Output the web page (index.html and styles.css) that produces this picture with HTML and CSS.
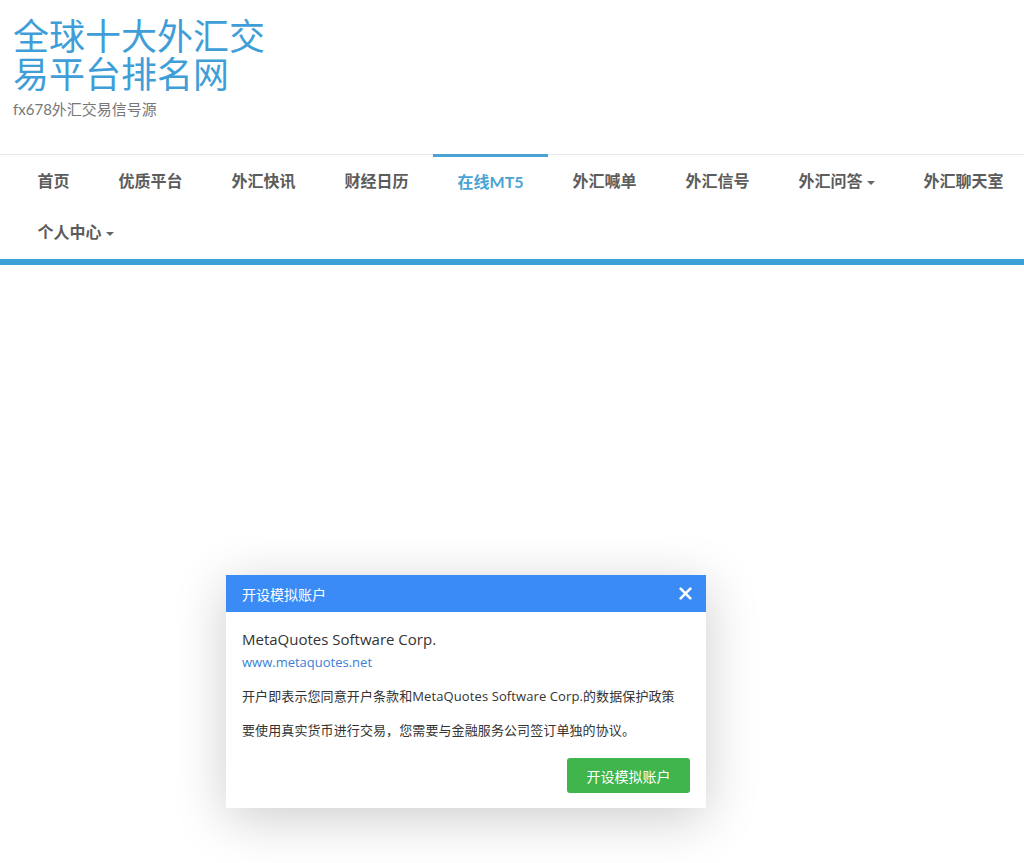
FILE: index.html
```html
<!DOCTYPE html>
<html lang="zh-CN">
<head>
<meta charset="utf-8">
<title>全球十大外汇交易平台排名网</title>
<link rel="stylesheet" href="styles.css">
</head>
<body>
<header class="site-header">
  <h1 class="site-title">全球十大外汇交易平台排名网</h1>
  <p class="site-desc">fx678外汇交易信号源</p>
</header>
<nav class="main-nav">
  <ul class="nav-list">
    <li class="nav-item"><a href="#">首页</a></li>
    <li class="nav-item"><a href="#">优质平台</a></li>
    <li class="nav-item"><a href="#">外汇快讯</a></li>
    <li class="nav-item"><a href="#">财经日历</a></li>
    <li class="nav-item active"><a href="#">在线MT5</a></li>
    <li class="nav-item"><a href="#">外汇喊单</a></li>
    <li class="nav-item"><a href="#">外汇信号</a></li>
    <li class="nav-item"><a href="#">外汇问答<span class="caret"></span></a></li>
    <li class="nav-item"><a href="#">外汇聊天室</a></li>
    <li class="nav-item"><a href="#">个人中心<span class="caret"></span></a></li>
  </ul>
</nav>
<main class="content"></main>

<div class="modal">
  <div class="modal-head">
    <span class="modal-title">开设模拟账户</span>
    <span class="modal-close">
      <svg width="13" height="13" viewBox="0 0 12 12"><path d="M1.5 1.5 L10.5 10.5 M10.5 1.5 L1.5 10.5" stroke="#fff" stroke-width="2.4" stroke-linecap="round"/></svg>
    </span>
  </div>
  <div class="modal-body">
    <div class="company">MetaQuotes Software Corp.</div>
    <a class="company-link" href="#">www.metaquotes.net</a>
    <p class="note">开户即表示您同意开户条款和MetaQuotes Software Corp.的数据保护政策</p>
    <p class="note">要使用真实货币进行交易，您需要与金融服务公司签订单独的协议。</p>
    <div class="modal-actions">
      <button class="btn-green">开设模拟账户</button>
    </div>
  </div>
</div>
</body>
</html>
```

FILE: styles.css
```css
* { box-sizing: border-box; }
html, body {
  margin: 0;
  padding: 0;
  background: #fff;
}
body {
  font-family: Lato, "Noto Sans CJK SC", sans-serif;
  color: #555;
  min-height: 863px;
  overflow-x: hidden;
}
.site-header {
  padding: 17px 0 0 13px;
}
.site-title {
  margin: 0;
  width: 270px;
  font-size: 36px;
  line-height: 38px;
  font-weight: 400;
  color: #3f9ed8;
}
.site-desc {
  margin: 6px 0 0;
  font-size: 15px;
  line-height: 20px;
  color: #777;
}
.main-nav {
  margin-top: 35px;
  border-top: 1px solid #e8e8e8;
  border-bottom: 6px solid #3ba0d5;
}
.nav-list {
  list-style: none;
  margin: 0 -20px 0 0;
  padding: 0 0 2px 13px;
  display: flex;
  flex-wrap: wrap;
}
.nav-item {
  height: 51px;
}
.nav-item a {
  display: block;
  padding: 0 24.5px;
  line-height: 51px;
  font-size: 16px;
  font-weight: 700;
  color: #5c5c5c;
  text-decoration: none;
}
.nav-item.active {
  margin-top: -1px;
  height: 52px;
  border-top: 3px solid #4aa3d3;
}
.nav-item.active a {
  line-height: 49px;
  color: #4aa3d3;
}
.caret {
  display: inline-block;
  margin-left: 4px;
  vertical-align: middle;
  width: 0;
  height: 0;
  border-top: 4px solid #666;
  border-left: 4px solid transparent;
  border-right: 4px solid transparent;
}
.content {
  height: 400px;
}

.modal {
  position: absolute;
  left: 226px;
  top: 575px;
  width: 480px;
  background: #fff;
  box-shadow: 0 10px 50px rgba(0, 0, 0, 0.2);
  font-family: "Open Sans", "Noto Sans CJK SC", sans-serif;
}
.modal-head {
  height: 37px;
  background: #3b8bf6;
  display: flex;
  align-items: center;
  justify-content: space-between;
  padding: 0 14px 0 16px;
}
.modal-title {
  color: #fff;
  font-size: 14px;
  font-family: "Noto Sans CJK SC", sans-serif;
}
.modal-close {
  display: flex;
  width: 13px;
  height: 13px;
}
.modal-body {
  padding: 17px 16px 15px;
}
.company {
  font-size: 15px;
  line-height: 20px;
  color: #333;
}
.company-link {
  display: block;
  margin-top: 3px;
  font-size: 13px;
  line-height: 20px;
  color: #3b7fd4;
  text-decoration: none;
}
.note {
  margin: 14px 0 0;
  font-size: 13px;
  line-height: 20px;
  color: #333;
  white-space: nowrap;
  letter-spacing: 0.1px;
}
.note + .note {
  margin-top: 14px;
}
.modal-actions {
  display: flex;
  justify-content: flex-end;
  margin-top: 18px;
}
.btn-green {
  width: 123px;
  height: 35px;
  border: 0;
  border-radius: 3px;
  background: #3fb54c;
  color: #fff;
  font-size: 14px;
  font-family: "Noto Sans CJK SC", sans-serif;
}
```
